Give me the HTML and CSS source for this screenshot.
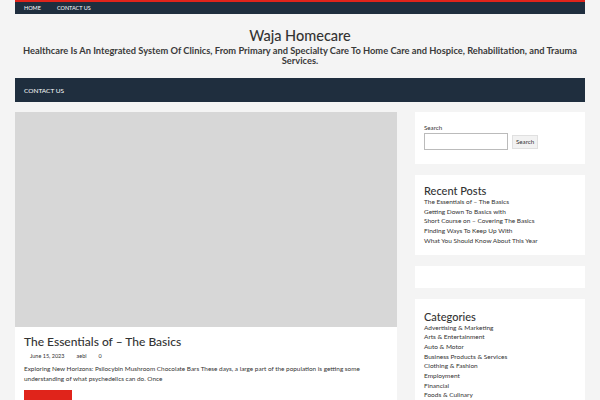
FILE: index.html
```html
<!DOCTYPE html>
<html>
<head>
<meta charset="utf-8">
<link rel="stylesheet" href="styles.css">
</head>
<body>
<div class="topbar">
  <div class="wrap topnav">
    <a href="#">HOME</a>
    <a href="#">CONTACT US</a>
  </div>
</div>
<header class="wrap header">
  <h1 class="site-title">Waja Homecare</h1>
  <p class="tagline">Healthcare Is An Integrated System Of Clinics, From Primary and Specialty Care To Home Care and Hospice, Rehabilitation, and Trauma Services.</p>
</header>
<nav class="wrap mainnav">
  <a href="#">CONTACT US</a>
</nav>
<div class="wrap content">
  <main class="primary">
    <article class="post">
      <div class="thumb"></div>
      <div class="post-body">
        <h2 class="post-title">The Essentials of – The Basics</h2>
        <div class="meta"><span>June 15, 2023</span><span>aebi</span><span>0</span></div>
        <p class="excerpt">Exploring New Horizons: Psilocybin Mushroom Chocolate Bars These days, a large part of the population is getting some understanding of what psychedelics can do. Once</p>
        <a class="more" href="#"></a>
      </div>
    </article>
  </main>
  <aside class="sidebar">
    <section class="widget search">
      <label>Search</label>
      <div class="search-row"><input type="text"><button>Search</button></div>
    </section>
    <section class="widget">
      <h3>Recent Posts</h3>
      <ul>
        <li>The Essentials of – The Basics</li>
        <li>Getting Down To Basics with</li>
        <li>Short Course on – Covering The Basics</li>
        <li>Finding Ways To Keep Up With</li>
        <li>What You Should Know About This Year</li>
      </ul>
    </section>
    <section class="widget empty"></section>
    <section class="widget cats">
      <h3>Categories</h3>
      <ul>
        <li>Advertising &amp; Marketing</li>
        <li>Arts &amp; Entertainment</li>
        <li>Auto &amp; Motor</li>
        <li>Business Products &amp; Services</li>
        <li>Clothing &amp; Fashion</li>
        <li>Employment</li>
        <li>Financial</li>
        <li>Foods &amp; Culinary</li>
      </ul>
    </section>
  </aside>
</div>
</body>
</html>
```
FILE: styles.css
```css
* { box-sizing: border-box; }
body {
  margin: 0;
  background: #f4f4f4;
  font-family: "Lato", "Open Sans", sans-serif;
  color: #333;
}
a { color: inherit; text-decoration: none; }
.wrap { width: 570px; margin: 0 auto; }
.topnav {
  border-top: 2px solid #e0241b;
  background: #1f2e3e;
  height: 14px;
  display: flex;
  padding-left: 9px;
  gap: 16px;
  align-items: center;
}
.topnav a { color: #fff; font-size: 5.5px; line-height: 12px; }
.header { text-align: center; padding-top: 13px; height: 64px; }
.site-title {
  margin: 0;
  font-size: 14.5px;
  font-weight: 500;
  color: #333;
  line-height: 17px;
}
.tagline {
  margin: 2px 0 0;
  font-size: 9.3px;
  font-weight: 700;
  line-height: 10px;
  color: #3a3a3a;
  padding: 0 4px;
}
.mainnav {
  background: #1f2e3e;
  height: 24px;
  display: flex;
  align-items: center;
  padding-left: 9px;
}
.mainnav a { color: #fff; font-size: 6.5px; }
.content { display: flex; gap: 18px; margin-top: 10px; align-items: flex-start; }
.primary { width: 382px; }
.post { background: #fff; }
.thumb { height: 215px; background: #d7d7d7; }
.post-body { padding: 8px 9px 0; }
.post-title { margin: 0; font-size: 12px; font-weight: 500; line-height: 14px; color: #333; }
.meta { display: flex; gap: 11px; padding-left: 6px; margin-top: 3px; font-size: 5.5px; line-height: 8px; color: #333; }
.meta span:nth-child(2) { margin-left: 1px; }
.meta span:nth-child(3) { margin-left: 1px; }
.excerpt { margin: 4px 0 0; font-size: 6.4px; line-height: 10px; color: #333; }
.more { display: block; width: 48px; height: 14px; background: #e0241b; margin-top: 6px; }
.sidebar { width: 170px; display: flex; flex-direction: column; gap: 11px; }
.widget { background: #fff; padding: 10px 9px 9px; }
.widget h3 { margin: 0; font-size: 11px; font-weight: 500; line-height: 12px; color: #333; }
.widget ul { list-style: none; margin: 0; padding: 0; }
.widget li { font-size: 6.5px; line-height: 9.7px; color: #333; }
.search { padding-top: 12px; height: 52px; }
.search label { display: block; font-size: 6.2px; line-height: 8px; }
.search-row { display: flex; align-items: center; gap: 4px; margin-top: 1px; }
.search input { width: 84px; height: 17px; border: 1px solid #bbb; padding: 0; background: #fff; }
.search button { height: 14px; font-size: 6.2px; font-family: inherit; background: #f2f2f2; border: 1px solid #e0e0e0; padding: 0 3px; color: #333; }
.empty { height: 22px; padding: 0; }
.cats { padding-top: 12px; }
```
